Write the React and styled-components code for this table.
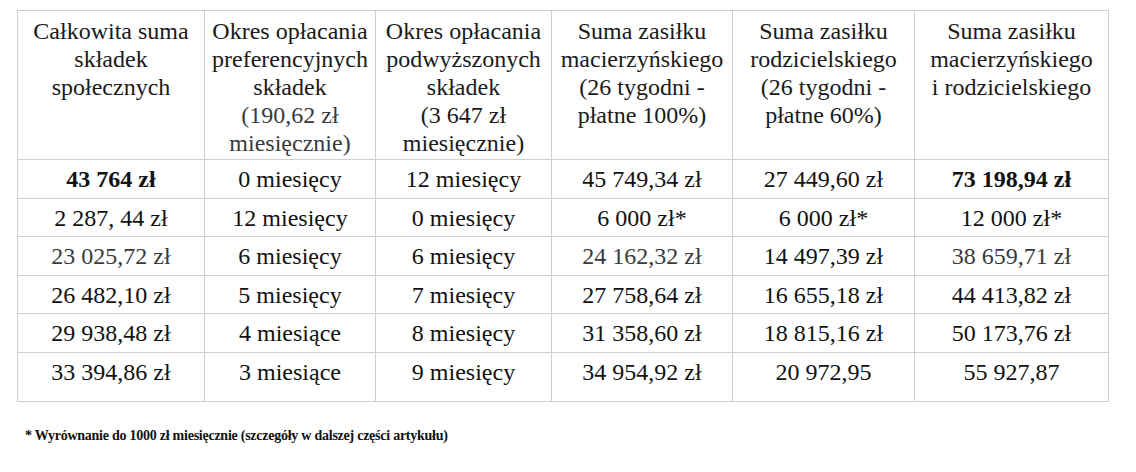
import React from "react";
import styled, { createGlobalStyle } from "styled-components";

const serif = `"Liberation Serif", "Times New Roman", Times, serif`;

const Global = createGlobalStyle`
  html, body { margin: 0; padding: 0; background: #fff; }
  body { font-family: ${serif}; color: #111; }
`;

const Page = styled.div`
  width: 1136px;
  height: 472px;
  padding: 10px 0 0 17px;
  box-sizing: border-box;
  background: #fff;
  font-family: ${serif};
`;

const Table = styled.table`
  border-collapse: collapse;
  table-layout: fixed;
  width: 1091px;
  font-family: ${serif};
  font-size: 24px;
  line-height: 28px;
`;

const HeadCell = styled.th`
  font-weight: normal;
  border: 1px solid #cfcfcf;
  padding: 6px 0 2px;
  height: 139px;
  vertical-align: top;
  text-align: center;
  white-space: nowrap;
  color: #1a1a1a;
`;

const Sub = styled.span`
  color: #3a3a3a;
`;

const Cell = styled.td`
  border: 1px solid #cfcfcf;
  padding: ${(p) => (p.$last ? "5px 0 15px" : "5px 0 4.6px")};
  text-align: center;
  vertical-align: top;
  white-space: nowrap;
  font-weight: ${(p) => (p.$bold ? "bold" : "normal")};
  color: ${(p) => (p.$muted ? "#3a3a3a" : "#111")};
`;

const Note = styled.p`
  margin: 26px 0 0 8px;
  font-family: ${serif};
  font-size: 14px;
  font-weight: bold;
  color: #111;
  letter-spacing: -0.25px;
`;

const widths = [187, 171, 176, 181, 182, 194];

const rows = [
  { cells: ["43 764 zł", "0 miesięcy", "12 miesięcy", "45 749,34 zł", "27 449,60 zł", "73 198,94 zł"], bold: [0, 5] },
  { cells: ["2 287, 44 zł", "12 miesięcy", "0 miesięcy", "6 000 zł*", "6 000 zł*", "12 000 zł*"] },
  { cells: ["23 025,72 zł", "6 miesięcy", "6 miesięcy", "24 162,32 zł", "14 497,39 zł", "38 659,71 zł"], muted: [0, 3, 5] },
  { cells: ["26 482,10 zł", "5 miesięcy", "7 miesięcy", "27 758,64 zł", "16 655,18 zł", "44 413,82 zł"] },
  { cells: ["29 938,48 zł", "4 miesiące", "8 miesięcy", "31 358,60 zł", "18 815,16 zł", "50 173,76 zł"] },
  { cells: ["33 394,86 zł", "3 miesiące", "9 miesięcy", "34 954,92 zł", "20 972,95", "55 927,87"] },
];

export default function App() {
  return (
    <Page>
      <Global />
      <Table>
        <colgroup>
          {widths.map((w, i) => (
            <col key={i} style={{ width: w }} />
          ))}
        </colgroup>
        <thead>
          <tr>
            <HeadCell>Całkowita suma<br />składek<br />społecznych</HeadCell>
            <HeadCell>
              Okres opłacania<br />preferencyjnych<br />składek<br />
              <Sub>(190,62 zł<br />miesięcznie)</Sub>
            </HeadCell>
            <HeadCell>
              Okres opłacania<br />podwyższonych<br />składek<br />
              (3 647 zł<br />miesięcznie)
            </HeadCell>
            <HeadCell>Suma zasiłku<br />macierzyńskiego<br />(26 tygodni -<br />płatne 100%)</HeadCell>
            <HeadCell>Suma zasiłku<br />rodzicielskiego<br />(26 tygodni -<br />płatne 60%)</HeadCell>
            <HeadCell>Suma zasiłku<br />macierzyńskiego<br />i rodzicielskiego</HeadCell>
          </tr>
        </thead>
        <tbody>
          {rows.map((r, ri) => (
            <tr key={ri}>
              {r.cells.map((c, ci) => (
                <Cell
                  key={ci}
                  $bold={r.bold && r.bold.includes(ci)}
                  $muted={r.muted && r.muted.includes(ci)}
                  $last={ri === rows.length - 1}
                >
                  {c}
                </Cell>
              ))}
            </tr>
          ))}
        </tbody>
      </Table>
      <Note>* Wyrównanie do 1000 zł miesięcznie (szczegóły w dalszej części artykułu)</Note>
    </Page>
  );
}
